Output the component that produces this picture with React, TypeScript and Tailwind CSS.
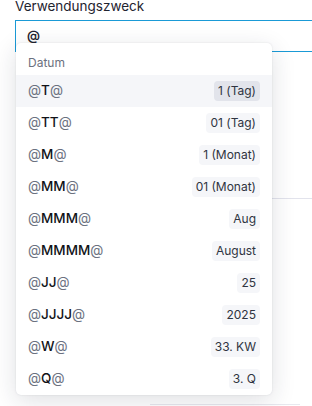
import React from "react";

const tokens = [
  { code: "T", value: "1 (Tag)" },
  { code: "TT", value: "01 (Tag)" },
  { code: "M", value: "1 (Monat)" },
  { code: "MM", value: "01 (Monat)" },
  { code: "MMM", value: "Aug" },
  { code: "MMMM", value: "August" },
  { code: "JJ", value: "25" },
  { code: "JJJJ", value: "2025" },
  { code: "W", value: "33. KW" },
  { code: "Q", value: "3. Q" },
];

export default function App() {
  const active = 0;

  return (
    <div className="w-[312px] h-[406px] overflow-hidden bg-white font-['Inter',sans-serif]">
      <div className="-mt-[4px] pl-[15px]">
        <label className="block text-[13.5px] leading-[20px] text-[#1f2430]">Verwendungszweck</label>
        <div className="mt-[4px] relative">
          <div className="h-[32px] border border-[#1a9ad6] border-r-0 pl-[11px] flex items-center text-[13px] font-semibold text-[#1f2430]">
            @
          </div>

          <div className="absolute left-[1px] top-[23px] w-[256px] z-10 bg-white rounded-[5px] shadow-[0_6px_24px_rgba(30,35,60,0.14),0_0_2px_rgba(30,35,60,0.12)]">
            <div className="px-3 pt-[12px] pb-[4px] text-[12px] leading-[16px] text-[#6b7180]">Datum</div>
            {tokens.map((t, i) => (
              <div
                key={t.code}
                className={
                  "h-[32px] px-3 flex items-center justify-between " +
                  (i === active ? "bg-[#f5f6f9]" : "")
                }
              >
                <span className="text-[13.5px] leading-none">
                  <span className="text-[#6b7180]">@</span>
                  <span className="font-medium text-[#111318]">{t.code}</span>
                  <span className="text-[#6b7180]">@</span>
                </span>
                <span
                  className={
                    "h-[20px] px-[4px] rounded-[4px] flex items-center text-[12px] text-[#2f3441] " +
                    (i === active ? "bg-[#e2e4eb]" : "bg-[#f5f6f9]")
                  }
                >
                  {t.value}
                </span>
              </div>
            ))}
          </div>
        </div>

        <div className="mt-[146px] ml-[257px] border-t border-[#e2e3ec]" />
        <div className="mt-[205px] ml-[135px] mr-[12px] border-t border-[#e8e9ef]" />
      </div>
    </div>
  );
}
